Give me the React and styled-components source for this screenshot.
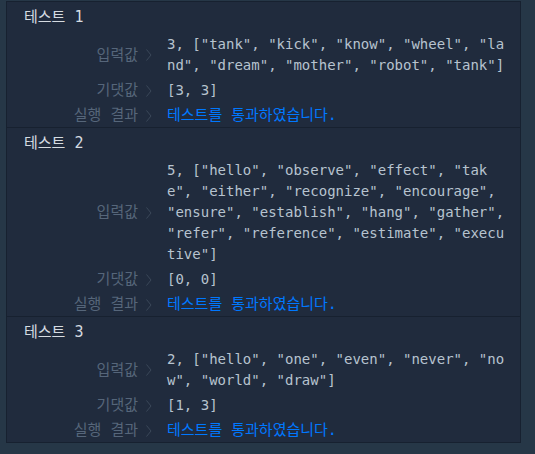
import styled, { createGlobalStyle } from "styled-components";

const tests = [
  {
    id: 1,
    input: '3, ["tank", "kick", "know", "wheel", "land", "dream", "mother", "robot", "tank"]',
    expected: "[3, 3]",
  },
  {
    id: 2,
    input:
      '5, ["hello", "observe", "effect", "take", "either", "recognize", "encourage", "ensure", "establish", "hang", "gather", "refer", "reference", "estimate", "executive"]',
    expected: "[0, 0]",
  },
  {
    id: 3,
    input: '2, ["hello", "one", "even", "never", "now", "world", "draw"]',
    expected: "[1, 3]",
  },
];

const GlobalStyle = createGlobalStyle`
  body {
    margin: 0;
    background: #263747;
    font-family: "DejaVu Sans Mono", "Noto Sans CJK KR", monospace;
  }
`;

const Chevron = () => (
  <ChevronIcon width="6" height="12" viewBox="0 0 6 12">
    <polyline points="0.5,0.5 5,6 0.5,11.5" fill="none" stroke="#3b4859" strokeWidth="1" />
  </ChevronIcon>
);

const App = () => {
  return (
    <>
      <GlobalStyle />
      <Panel>
        {tests.map((test) => (
          <Section key={test.id}>
            <Title>테스트 {test.id}</Title>
            <Rows>
              <Label>입력값</Label>
              <Arrow>
                <Chevron />
              </Arrow>
              <Value>{test.input}</Value>
              <Label>기댓값</Label>
              <Arrow>
                <Chevron />
              </Arrow>
              <Value>{test.expected}</Value>
              <Label>실행 결과</Label>
              <Arrow>
                <Chevron />
              </Arrow>
              <Value success>테스트를 통과하였습니다.</Value>
            </Rows>
          </Section>
        ))}
      </Panel>
    </>
  );
};

const Panel = styled.div`
  margin: 1px 0 0 6px;
  width: 513px;
  background: #202b3d;
  border: 1px solid #172130;
`;

const Section = styled.div`
  padding: 5px 13px 1px 17px;
  border-bottom: 1px solid #172130;
  font-size: 14px;
  line-height: 21px;

  &:last-child {
    border-bottom: 0;
  }
`;

const Title = styled.div`
  color: #d5dbe1;
  font-size: 15px;
  margin-bottom: 6px;
`;

const Rows = styled.div`
  display: grid;
  grid-template-columns: 114px 29px 1fr;
  row-gap: 4px;
`;

const Label = styled.div`
  color: #56667a;
  font-size: 15px;
  text-align: right;
  align-self: center;
`;

const Arrow = styled.div`
  display: flex;
  align-items: center;
  padding-left: 8px;
`;

const ChevronIcon = styled.svg`
  display: block;
`;

const Value = styled.div`
  color: ${(props) => (props.success ? "#0078ff" : "#b7c3cf")};
  font-size: ${(props) => (props.success ? "15px" : "14px")};
  word-break: break-all;
  white-space: pre-wrap;
`;

export default App;
